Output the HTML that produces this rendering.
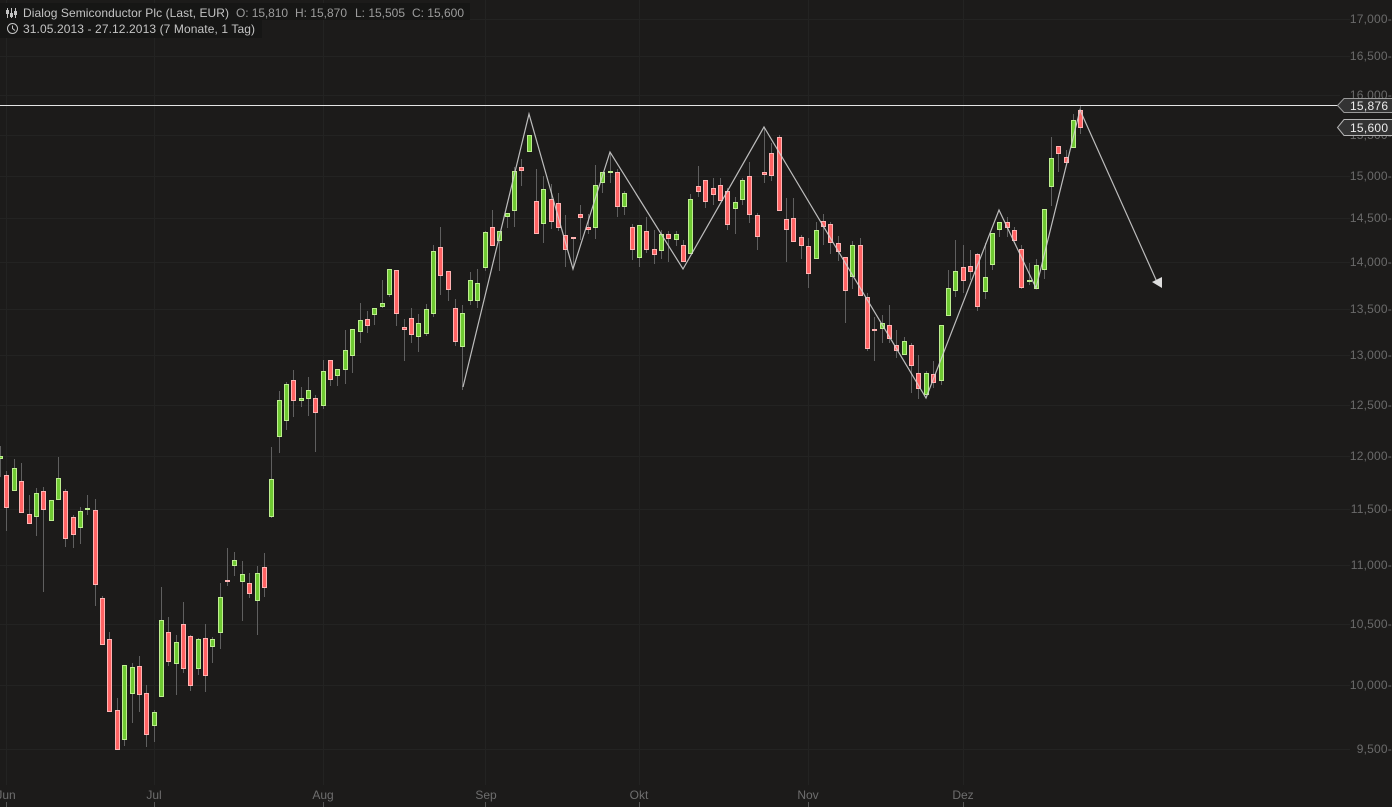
<!DOCTYPE html>
<html><head><meta charset="utf-8"><title>Dialog Semiconductor Plc</title>
<style>
html,body{margin:0;padding:0;width:1392px;height:807px;overflow:hidden;background:#1c1b1a}
svg{display:block;position:absolute;left:0;top:0}
text{font-family:"Liberation Sans",sans-serif;font-size:12px}
</style></head><body>
<svg width="1392" height="807" viewBox="0 0 1392 807" xmlns="http://www.w3.org/2000/svg">
<rect width="1392" height="807" fill="#1c1b1a"/>
<path fill="none" stroke="#232322" stroke-width="1" d="M0 19.5H1350M0 56.5H1350M0 95.5H1340M0 135.5H1340M0 176.5H1350M0 218.5H1350M0 262.5H1350M0 309.5H1350M0 355.5H1350M0 405.5H1350M0 456.5H1350M0 509.5H1350M0 565.5H1350M0 624.5H1350M0 685.5H1350M0 749.5H1350M6.5 0V785M154.5 0V785M323.5 0V785M485.5 0V785M639.5 0V785M808.5 0V785M963.5 0V785"/>
<path fill="none" stroke="#5f5f5f" stroke-width="1" d="M0.5 446V477M6.5 471V531M14.5 459V491M21.5 463V513M29.5 495V524M36.5 488V536M43.5 487V592M51.5 500V521M58.5 457V500M65.5 489V547M73.5 515V548M80.5 507V544M87.5 495V515M95.5 499V606M102.5 596V645M109.5 632V712M117.5 698V750M124.5 665V746M132.5 663V723M139.5 656V712M146.5 685V747M154.5 710V742M161.5 587V697M168.5 617V666M176.5 635V695M183.5 602V673M190.5 635V691M198.5 638V675M205.5 624V692M212.5 637V663M220.5 583V649M227.5 548V586M234.5 552V576M242.5 561V621M249.5 573V598M257.5 566V635M264.5 553V597M271.5 447V518M279.5 391V453M286.5 382V430M293.5 370V417M301.5 387V407M308.5 377V416M315.5 395V452M323.5 360V409M330.5 360V386M337.5 369V386M345.5 330V384M352.5 329V373M360.5 303V343M367.5 311V333M374.5 308V325M382.5 280V308M389.5 269V297M396.5 270V326M404.5 319V361M411.5 308V343M418.5 314V352M426.5 304V336M433.5 245V317M440.5 227V295M448.5 271V301M455.5 299V346M462.5 305V390M470.5 272V305M477.5 269V308M485.5 231V271M492.5 210V246M499.5 231V271M507.5 213V228M514.5 167V227M521.5 159V186M529.5 135V152M536.5 169V234M543.5 176V243M551.5 184V229M558.5 193V231M565.5 215V267M573.5 237V267M580.5 205V240M588.5 214V234M595.5 165V239M602.5 172V193M610.5 153V183M617.5 169V217M624.5 191V215M632.5 224V260M639.5 225V267M646.5 217V253M654.5 230V264M661.5 230V259M668.5 231V262M676.5 231V246M683.5 240V262M690.5 194V254M698.5 166V197M705.5 180V208M713.5 178V205M720.5 178V201M727.5 188V230M735.5 197V234M742.5 178V205M749.5 162V223M757.5 213V250M764.5 128V183M771.5 143V181M779.5 135V211M786.5 198V262M793.5 198V242M801.5 235V259M808.5 238V288M816.5 222V259M823.5 214V245M830.5 222V254M838.5 236V261M845.5 257V323M852.5 241V289M860.5 238V296M867.5 293V351M874.5 317V361M882.5 315V343M889.5 305V343M896.5 330V358M904.5 337V355M911.5 343V393M918.5 355V399M926.5 371V395M933.5 361V388M941.5 325V385M948.5 270V316M955.5 240V297M963.5 245V293M970.5 250V280M977.5 253V311M985.5 243V299M992.5 233V270M999.5 222V237M1007.5 217V237M1014.5 227V241M1021.5 245V289M1029.5 263V285M1036.5 259V289M1044.5 209V279M1051.5 137V206M1058.5 146V172M1066.5 150V163M1073.5 114V148M1080.5 105V134"/>
<path fill="#6fc932" stroke="#bdee8f" stroke-width="1" d="M-1.5 456.5h4V458.5h-4zM12.5 468.5h4V490.5h-4zM34.5 493.5h4V516.5h-4zM49.5 500.5h4V520.5h-4zM56.5 478.5h4V499.5h-4zM78.5 511.5h4V527.5h-4zM85.5 508.5h4V509.5h-4zM122.5 665.5h4V739.5h-4zM130.5 667.5h4V693.5h-4zM152.5 712.5h4V725.5h-4zM159.5 620.5h4V696.5h-4zM174.5 642.5h4V663.5h-4zM196.5 639.5h4V668.5h-4zM210.5 639.5h4V646.5h-4zM218.5 597.5h4V632.5h-4zM232.5 560.5h4V565.5h-4zM240.5 574.5h4V581.5h-4zM255.5 573.5h4V600.5h-4zM269.5 479.5h4V516.5h-4zM277.5 400.5h4V436.5h-4zM284.5 384.5h4V420.5h-4zM299.5 398.5h4V400.5h-4zM306.5 390.5h4V398.5h-4zM321.5 371.5h4V405.5h-4zM335.5 369.5h4V375.5h-4zM343.5 350.5h4V369.5h-4zM350.5 329.5h4V355.5h-4zM358.5 320.5h4V331.5h-4zM372.5 308.5h4V314.5h-4zM380.5 303.5h4V306.5h-4zM387.5 269.5h4V294.5h-4zM416.5 323.5h4V336.5h-4zM424.5 309.5h4V333.5h-4zM431.5 251.5h4V313.5h-4zM460.5 313.5h4V346.5h-4zM468.5 280.5h4V300.5h-4zM475.5 283.5h4V300.5h-4zM483.5 232.5h4V267.5h-4zM497.5 231.5h4V240.5h-4zM505.5 213.5h4V216.5h-4zM512.5 171.5h4V210.5h-4zM527.5 135.5h4V151.5h-4zM541.5 189.5h4V223.5h-4zM593.5 185.5h4V227.5h-4zM600.5 172.5h4V182.5h-4zM608.5 171.5h4V172.5h-4zM622.5 193.5h4V206.5h-4zM637.5 225.5h4V257.5h-4zM659.5 234.5h4V250.5h-4zM674.5 234.5h4V239.5h-4zM688.5 199.5h4V253.5h-4zM733.5 202.5h4V208.5h-4zM740.5 180.5h4V199.5h-4zM814.5 230.5h4V258.5h-4zM850.5 245.5h4V276.5h-4zM880.5 323.5h4V328.5h-4zM902.5 341.5h4V354.5h-4zM924.5 373.5h4V394.5h-4zM939.5 325.5h4V380.5h-4zM946.5 288.5h4V315.5h-4zM953.5 271.5h4V290.5h-4zM983.5 277.5h4V291.5h-4zM990.5 233.5h4V264.5h-4zM997.5 222.5h4V229.5h-4zM1027.5 280.5h4V281.5h-4zM1034.5 265.5h4V288.5h-4zM1042.5 209.5h4V269.5h-4zM1049.5 158.5h4V186.5h-4zM1071.5 120.5h4V147.5h-4z"/>
<path fill="#ff6363" stroke="#ffb3b3" stroke-width="1" d="M4.5 475.5h4V507.5h-4zM19.5 481.5h4V512.5h-4zM27.5 514.5h4V523.5h-4zM41.5 491.5h4V509.5h-4zM63.5 491.5h4V538.5h-4zM71.5 517.5h4V534.5h-4zM93.5 510.5h4V584.5h-4zM100.5 598.5h4V644.5h-4zM107.5 639.5h4V711.5h-4zM115.5 710.5h4V749.5h-4zM137.5 666.5h4V694.5h-4zM144.5 693.5h4V734.5h-4zM166.5 632.5h4V661.5h-4zM181.5 624.5h4V668.5h-4zM188.5 636.5h4V685.5h-4zM203.5 638.5h4V675.5h-4zM225.5 580.5h4V581.5h-4zM247.5 583.5h4V593.5h-4zM262.5 567.5h4V587.5h-4zM291.5 380.5h4V400.5h-4zM313.5 398.5h4V412.5h-4zM328.5 360.5h4V379.5h-4zM365.5 319.5h4V325.5h-4zM394.5 270.5h4V313.5h-4zM402.5 327.5h4V329.5h-4zM409.5 318.5h4V334.5h-4zM438.5 247.5h4V275.5h-4zM446.5 271.5h4V289.5h-4zM453.5 308.5h4V341.5h-4zM490.5 227.5h4V245.5h-4zM519.5 167.5h4V170.5h-4zM534.5 201.5h4V233.5h-4zM549.5 199.5h4V221.5h-4zM556.5 203.5h4V227.5h-4zM563.5 235.5h4V249.5h-4zM571.5 237.5h4V238.5h-4zM578.5 214.5h4V217.5h-4zM586.5 227.5h4V229.5h-4zM615.5 172.5h4V206.5h-4zM630.5 227.5h4V249.5h-4zM644.5 231.5h4V249.5h-4zM652.5 249.5h4V254.5h-4zM666.5 234.5h4V238.5h-4zM681.5 245.5h4V261.5h-4zM696.5 186.5h4V191.5h-4zM703.5 180.5h4V201.5h-4zM711.5 188.5h4V194.5h-4zM718.5 185.5h4V200.5h-4zM725.5 191.5h4V224.5h-4zM747.5 176.5h4V214.5h-4zM755.5 215.5h4V236.5h-4zM762.5 172.5h4V174.5h-4zM769.5 153.5h4V175.5h-4zM777.5 137.5h4V210.5h-4zM784.5 219.5h4V229.5h-4zM791.5 218.5h4V241.5h-4zM799.5 237.5h4V245.5h-4zM806.5 246.5h4V273.5h-4zM821.5 221.5h4V226.5h-4zM828.5 224.5h4V242.5h-4zM836.5 243.5h4V251.5h-4zM843.5 257.5h4V290.5h-4zM858.5 245.5h4V295.5h-4zM865.5 297.5h4V348.5h-4zM872.5 329.5h4V330.5h-4zM887.5 325.5h4V338.5h-4zM894.5 345.5h4V350.5h-4zM909.5 345.5h4V365.5h-4zM916.5 373.5h4V388.5h-4zM931.5 374.5h4V382.5h-4zM961.5 267.5h4V280.5h-4zM968.5 266.5h4V271.5h-4zM975.5 254.5h4V306.5h-4zM1005.5 222.5h4V227.5h-4zM1012.5 230.5h4V240.5h-4zM1019.5 249.5h4V287.5h-4zM1056.5 146.5h4V153.5h-4zM1064.5 157.5h4V162.5h-4zM1078.5 110.5h4V127.5h-4z"/>
<path fill="none" stroke="#cfcfcf" stroke-width="1.2" stroke-opacity=".9" d="M463 387L529 114L573 269L610 152L683 269L764 127L926 398L999 210L1036 288L1080 110L1157 282"/>
<path fill="#dedede" d="M1162 277L1152 282L1162 288Z"/>
<path fill="none" stroke="#e4e4e4" stroke-width="1" d="M0 105.5H1338"/>
<g fill="#6a6a6a" text-anchor="end" style="letter-spacing:.2px">
<text x="1392" y="23">17,000-</text>
<text x="1392" y="60">16,500-</text>
<text x="1392" y="99">16,000-</text>
<text x="1392" y="139">15,500-</text>
<text x="1392" y="180">15,000-</text>
<text x="1392" y="222">14,500-</text>
<text x="1392" y="266">14,000-</text>
<text x="1392" y="313">13,500-</text>
<text x="1392" y="359">13,000-</text>
<text x="1392" y="409">12,500-</text>
<text x="1392" y="460">12,000-</text>
<text x="1392" y="513">11,500-</text>
<text x="1392" y="569">11,000-</text>
<text x="1392" y="628">10,500-</text>
<text x="1392" y="689">10,000-</text>
<text x="1392" y="753">9,500-</text>
</g>
<path fill="#333" stroke="#9a9a9a" stroke-width="1" d="M1392 98.5H1344L1337.5 105.5L1344 112.5H1392"/>
<path fill="#333" stroke="#b5b5b5" stroke-width="1" d="M1392 119.5H1344L1337.5 127.5L1344 135.5H1392"/>
<text x="1350" y="110" fill="#ececec" textLength="38">15,876</text>
<text x="1350" y="132" fill="#ececec" textLength="38">15,600</text>
<g fill="#6e6e6e" text-anchor="middle">
<text x="6" y="799">Jun</text>
<text x="154" y="799">Jul</text>
<text x="323" y="799">Aug</text>
<text x="486" y="799">Sep</text>
<text x="639" y="799">Okt</text>
<text x="808" y="799">Nov</text>
<text x="963" y="799">Dez</text>
</g>
<path fill="none" stroke="#555" stroke-width="1" d="M6.5 802V807M154.5 802V807M323.5 802V807M485.5 802V807M639.5 802V807M808.5 802V807M963.5 802V807"/>
<rect x="0" y="3" width="470" height="17" fill="#161615"/>
<rect x="0" y="20" width="262" height="18" fill="#161615"/>
<g fill="none" stroke="#c4c4c4" stroke-width="1">
<path d="M7.5 8V18M11.5 8V18M15.5 8V18"/>
<rect x="6.5" y="10.5" width="2" height="3"/>
<rect x="10.5" y="13.5" width="2" height="3"/>
<rect x="14.5" y="11.5" width="2" height="3"/>
<circle cx="12.5" cy="28.5" r="5"/>
<path d="M12.5 25.5V28.5L15 30.5"/>
</g>
<text x="23" y="17" fill="#c4c4c4" textLength="206">Dialog Semiconductor Plc (Last, EUR)</text>
<text x="236" y="17" fill="#9c9c9c" textLength="52">O: 15,810</text>
<text x="295" y="17" fill="#9c9c9c" textLength="52">H: 15,870</text>
<text x="355" y="17" fill="#9c9c9c" textLength="50">L: 15,505</text>
<text x="412" y="17" fill="#9c9c9c" textLength="52">C: 15,600</text>
<text x="23" y="33" fill="#c4c4c4" textLength="232">31.05.2013 - 27.12.2013 (7 Monate, 1 Tag)</text>
</svg>
</body></html>
